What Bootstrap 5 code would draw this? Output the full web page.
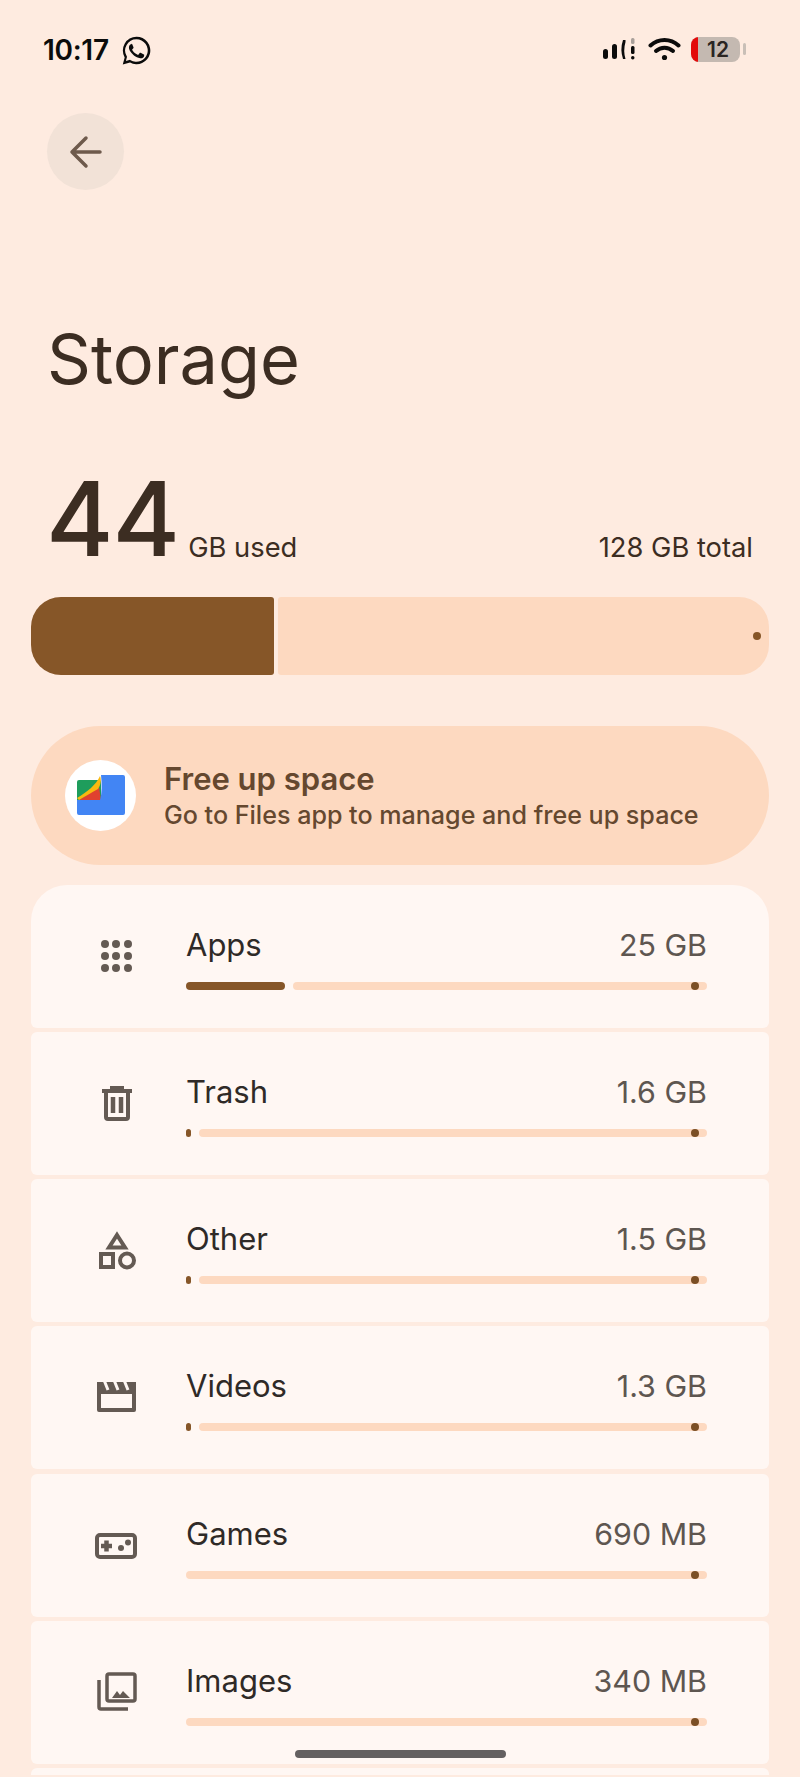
<!DOCTYPE html>
<html lang="en">
<head>
<meta charset="utf-8">
<title>Storage</title>
<link href="https://cdn.jsdelivr.net/npm/bootstrap@5.3.0/dist/css/bootstrap.min.css" rel="stylesheet">
<style>
html,body{height:1777px;overflow:hidden}
body{background:#feebe0;color:#3c2d22;font-family:"Inter","Noto Sans",sans-serif;position:relative}
svg{display:block}
.stat-bar{height:100px;padding:0 0 0 43px}
.clock{font-weight:600;font-size:28px;color:#0b0b0b;line-height:1;letter-spacing:-.3px}
.wa-icon{margin-left:11px}
.stat-cluster{left:601px;top:36px}
.batt-body{width:49px;height:25px;border-radius:8px;background:#c4b9b1}
.batt-red{position:absolute;left:0;top:0;bottom:0;width:7px;background:#e30b0b}
.batt-num{font-weight:600;font-size:21px;color:#2a2522;padding-left:5px;line-height:1}
.batt-cap{width:3px;height:12px;border-radius:2px;background:#c9bfb7;margin-left:3px}
.wifi-icon{margin-left:11px}
.batt{margin-left:10px}
.back-wrap{padding:13px 0 0 47px;height:103px}
.back-circle{width:77px;height:77px;border-radius:50%;background:#f2e2d7}
.page-title{font-size:68.500px;font-weight:400;line-height:68px;margin:0;padding-left:47px;margin-top:123px;color:#3c2d22}
.usage-row{padding:0 47px 0 46px;margin-top:83px;height:84px}
.big-num{font-size:103px;font-weight:500;line-height:84px;letter-spacing:-1px;height:84px}
.used-label{font-size:27.300px;line-height:1;margin-left:9px}
.total-label{font-size:27.300px;line-height:1}
.main-bar{margin:35.600px 31px 0;height:78px;gap:4px}
.main-used{width:243px;background:#865628;border-radius:30px 3px 3px 30px}
.main-free{background:#fdd9c0;border-radius:3px 30px 30px 3px;padding-right:8px}
.main-dot{width:8px;height:8px;border-radius:50%;background:#865628}
.free-card{margin:51px 31px 0;height:139px;background:#fdd9c0;border-radius:70px;padding-left:34px;color:#65482f}
.free-icon{width:71px;height:71px;border-radius:50%;background:#fff;flex:none;margin-right:28px}
.free-text{padding-top:5px}
.free-title{font-size:31px;font-weight:600;line-height:36px}
.free-sub{font-size:25.100px;font-weight:500;line-height:37px}
.cat-list{margin:20px 31px 0;gap:4.300px}
.cat-item{height:143px;background:#fff7f3;border-radius:6px;padding:0 62px 0 62px;align-items:flex-start}
.cat-item:first-child{border-radius:36px 36px 6px 6px}
.cat-item:last-child{height:7px;border-radius:6px 6px 0 0}
.cat-icon{width:44px;height:44px;flex:none;margin-top:49px;margin-right:49px}
.cat-body{padding-top:42px}
.cat-name{font-size:31px;line-height:36px;color:#2f2a27}
.cat-size{font-size:30.400px;line-height:36px;color:#5e5650}
.track{height:8px;margin-top:19px;gap:8px;position:relative}
.seg-used{background:#865628;border-radius:4px;height:8px}
.seg-rest{background:#fdd9c0;border-radius:4px;height:8px;position:relative}
.seg-end{position:absolute;right:8px;top:0;width:8px;height:8px;border-radius:50%;background:#7b4f25}
.home-pill{position:absolute;left:295px;bottom:19px;width:211px;height:8px;border-radius:4px;background:#646060}
</style>
</head>
<body>
<div class="stat-bar d-flex align-items-center position-relative">
  <span class="clock">10:17</span>
  <svg class="wa-icon" width="33" height="33" viewBox="0 0 24 24" fill="#0b0b0b"><path d="M12 2a10 10 0 0 0-8.600 15l-1.400 5.200 5.300-1.400A10 10 0 1 0 12 2zm0 1.800a8.200 8.200 0 1 1-4.300 15.200l-.4-.2-3 .8.800-3-.2-.4A8.200 8.200 0 0 1 12 3.800z"/><path d="M8.500 7.200c-.3 0-.7.100-1 .5-.4.400-1 1-1 2.300s1 2.600 1.100 2.800c.1.200 1.900 3 4.700 4.100 2.300.9 2.800.7 3.300.7s1.600-.7 1.800-1.300c.2-.6.200-1.200.2-1.300-.1-.1-.3-.2-.6-.3l-2-1c-.3-.1-.5-.1-.7.100l-.9 1.200c-.2.200-.3.200-.6.100-.3-.2-1.200-.5-2.300-1.400-.9-.8-1.400-1.700-1.600-2-.2-.3 0-.4.100-.6l.5-.5.3-.5c.1-.2 0-.4 0-.5l-.9-2.200c-.2-.3-.4-.3-.5-.3z"/></svg>
  <div class="position-absolute d-flex align-items-center stat-cluster">
    <svg width="36" height="26" viewBox="0 0 36 26" fill="#0b0b0b"><rect x="2" y="13" width="5" height="10" rx="2.500"/><rect x="11" y="8" width="5" height="15" rx="2.500"/><path d="M22 4h2.500v2a30 30 0 0 0 0 17H22a30 30 0 0 1 0-19z"/><rect x="30" y="2" width="3.500" height="6" rx="1.500" fill="#a9a09a"/><rect x="30" y="10" width="3.500" height="8" rx="1.500"/><rect x="30" y="20" width="3.500" height="3.500" rx="1.700"/></svg>
    <svg class="wifi-icon" width="33" height="26" viewBox="0 0 33 26" fill="none" stroke="#0b0b0b" stroke-width="4" stroke-linecap="round"><path d="M2.500 9.500c8-7.500 20-7.500 28 0"/><path d="M8 15c5-4.500 12-4.500 17 0"/><circle cx="16.500" cy="21.500" r="2.600" fill="#0b0b0b" stroke="none"/></svg>
    <div class="batt d-flex align-items-center">
      <div class="batt-body position-relative overflow-hidden d-flex align-items-center justify-content-center"><span class="batt-red"></span><span class="batt-num">12</span></div>
      <span class="batt-cap"></span>
    </div>
  </div>
</div>
<div class="back-wrap">
  <div class="back-circle d-flex align-items-center justify-content-center">
    <svg width="34" height="34" viewBox="0 0 34 34" fill="none" stroke="#6e5a4c" stroke-width="3.500" stroke-linecap="round" stroke-linejoin="round"><path d="M31 17H3M17 3 3 17l14 14"/></svg>
  </div>
</div>
<h1 class="page-title">Storage</h1>
<div class="usage-row d-flex align-items-end">
  <span class="big-num">44</span>
  <span class="used-label">GB used</span>
  <span class="total-label ms-auto">128 GB total</span>
</div>
<div class="main-bar d-flex">
  <div class="main-used"></div>
  <div class="main-free flex-grow-1 d-flex align-items-center justify-content-end"><span class="main-dot"></span></div>
</div>
<div class="free-card d-flex align-items-center">
  <div class="free-icon d-flex align-items-center justify-content-center">
    <svg width="48" height="40" viewBox="0 0 48 40"><rect x="0" y="5" width="24" height="24" rx="2" fill="#1e9d5c"/><path d="M2 25 22 12l2 13z" fill="#e0412f"/><path d="M0 23C10 17 19 10 23 1c2 5 0 10-2 13-6 3-12 7-19 11z" fill="#f9b90f"/><path d="M24 0h22a2 2 0 0 1 2 2v36a2 2 0 0 1-2 2H2a2 2 0 0 1-2-2V25h23c2-7 2-16 1-25z" fill="#4285f4"/></svg>
  </div>
  <div class="free-text">
    <div class="free-title">Free up space</div>
    <div class="free-sub">Go to Files app to manage and free up space</div>
  </div>
</div>
<div class="cat-list d-flex flex-column">
  <div class="cat-item d-flex">
    <svg class="cat-icon" viewBox="0 0 44 44" fill="#645a53"><circle cx="12" cy="10" r="4"/><circle cx="23" cy="10" r="4"/><circle cx="35" cy="10" r="4"/><circle cx="12" cy="22" r="4"/><circle cx="23" cy="22" r="4"/><circle cx="35" cy="22" r="4"/><circle cx="12" cy="34" r="4"/><circle cx="23" cy="34" r="4"/><circle cx="35" cy="34" r="4"/></svg>
    <div class="cat-body flex-grow-1">
      <div class="d-flex justify-content-between"><span class="cat-name">Apps</span><span class="cat-size">25 GB</span></div>
      <div class="track d-flex"><div class="seg-used" style="width:99px"></div><div class="seg-rest flex-grow-1"><span class="seg-end"></span></div></div>
    </div>
  </div>
  <div class="cat-item d-flex">
    <svg class="cat-icon" viewBox="0 0 44 44" fill="none" stroke="#645a53" stroke-width="4"><path d="M9 10h30M13 10v26a2 2 0 0 0 2 2h18a2 2 0 0 0 2-2V10M17 7h14" /><path d="M20 16v16M28 16v16" stroke-width="4.500"/></svg>
    <div class="cat-body flex-grow-1">
      <div class="d-flex justify-content-between"><span class="cat-name">Trash</span><span class="cat-size">1.6 GB</span></div>
      <div class="track d-flex"><div class="seg-used" style="width:5px"></div><div class="seg-rest flex-grow-1"><span class="seg-end"></span></div></div>
    </div>
  </div>
  <div class="cat-item d-flex">
    <svg class="cat-icon" viewBox="0 0 44 44" fill="none" stroke="#645a53" stroke-width="4"><path d="M24 7l8 12.500H16z"/><rect x="8" y="26" width="12" height="13"/><circle cx="34" cy="32.500" r="7"/></svg>
    <div class="cat-body flex-grow-1">
      <div class="d-flex justify-content-between"><span class="cat-name">Other</span><span class="cat-size">1.5 GB</span></div>
      <div class="track d-flex"><div class="seg-used" style="width:5px"></div><div class="seg-rest flex-grow-1"><span class="seg-end"></span></div></div>
    </div>
  </div>
  <div class="cat-item d-flex">
    <svg class="cat-icon" viewBox="0 0 44 44"><path fill="#645a53" fill-rule="evenodd" d="M4 7h39v28a2 2 0 0 1-2 2H6a2 2 0 0 1-2-2zM8 19v14h31V19z"/><path d="M11 5l4 10M21 5l4 10M31 5l4 10" stroke="#fff7f3" stroke-width="3" fill="none"/></svg>
    <div class="cat-body flex-grow-1">
      <div class="d-flex justify-content-between"><span class="cat-name">Videos</span><span class="cat-size">1.3 GB</span></div>
      <div class="track d-flex"><div class="seg-used" style="width:5px"></div><div class="seg-rest flex-grow-1"><span class="seg-end"></span></div></div>
    </div>
  </div>
  <div class="cat-item d-flex">
    <svg class="cat-icon" viewBox="0 0 44 44" fill="none" stroke="#645a53" stroke-width="4"><rect x="4" y="12" width="38" height="22" rx="3"/><path d="M8 23h11M13.500 17.500v11" stroke-width="4.500"/><circle cx="28" cy="25" r="3" fill="#645a53" stroke="none"/><circle cx="35" cy="19.500" r="3" fill="#645a53" stroke="none"/></svg>
    <div class="cat-body flex-grow-1">
      <div class="d-flex justify-content-between"><span class="cat-name">Games</span><span class="cat-size">690 MB</span></div>
      <div class="track d-flex"><div class="seg-rest flex-grow-1"><span class="seg-end"></span></div></div>
    </div>
  </div>
  <div class="cat-item d-flex">
    <svg class="cat-icon" viewBox="0 0 44 44" fill="none" stroke="#645a53" stroke-width="3.500"><rect x="14" y="4" width="28" height="27" rx="2"/><path d="M6 10v27a2 2 0 0 0 2 2h27"/><path d="M19 28l5-7 3 4 3-4 7 7z" fill="#645a53" stroke="none"/></svg>
    <div class="cat-body flex-grow-1">
      <div class="d-flex justify-content-between"><span class="cat-name">Images</span><span class="cat-size">340 MB</span></div>
      <div class="track d-flex"><div class="seg-rest flex-grow-1"><span class="seg-end"></span></div></div>
    </div>
  </div>
  <div class="cat-item d-flex"></div>
</div>
<div class="home-pill"></div>
<script src="https://cdn.jsdelivr.net/npm/bootstrap@5.3.0/dist/js/bootstrap.bundle.min.js"></script>
</body>
</html>
